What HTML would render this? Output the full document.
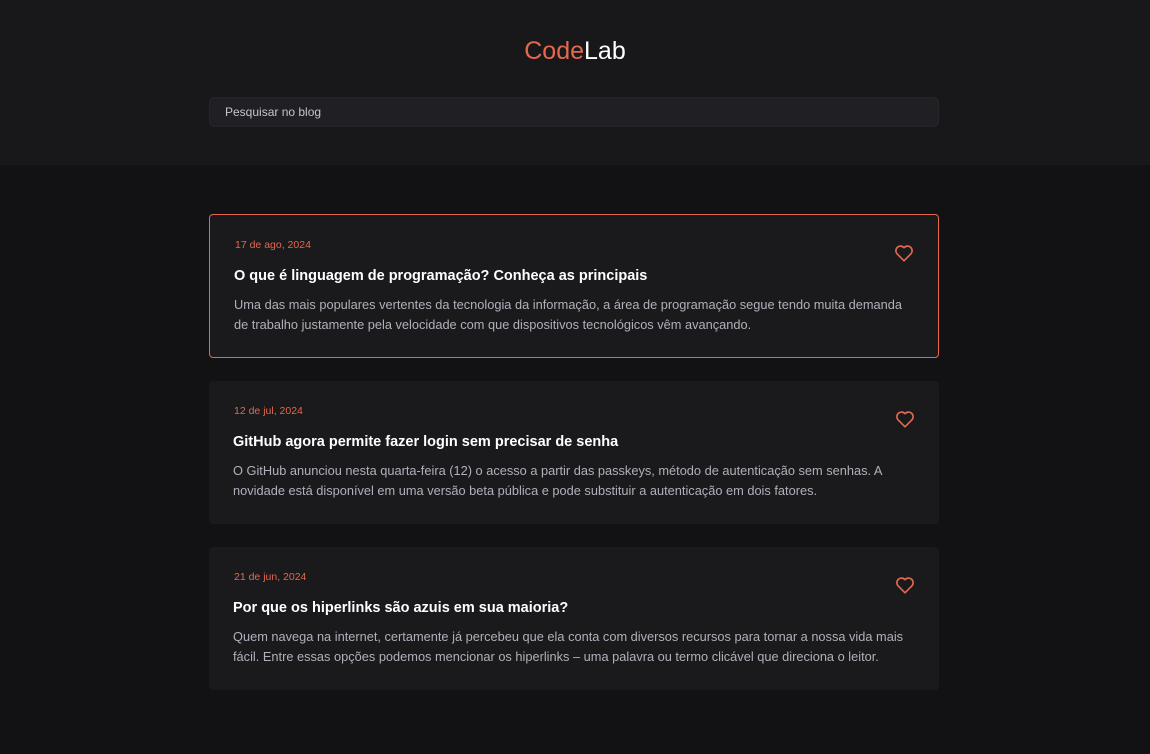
<!DOCTYPE html>
<html><head><meta charset="utf-8"><style>
*{margin:0;padding:0;box-sizing:border-box}
body{width:1150px;height:754px;background:#121214;font-family:"Liberation Sans",sans-serif;overflow:hidden}
header{height:165px;background:#18181b;position:relative}
h1{position:absolute;top:37px;width:100%;text-align:center;font-size:25px;font-weight:normal;color:#fff;letter-spacing:0}
h1 span{color:#e3684f}
.search{position:absolute;left:209px;top:97px;width:730px;height:30px;background:#202024;border:1px solid #26262a;border-radius:5px;color:#c4c4cc;font-size:12px;padding:7px 15px}
.card{position:absolute;left:209px;width:730px;background:#1a1a1d;border-radius:4px;padding:0 24px}
.card.a{border:1px solid #e3684f}
.date{position:absolute;top:24px;left:25px;color:#e3684f;font-size:10.5px}
.t{position:absolute;top:53px;left:24px;color:#fff;font-size:14.5px;font-weight:bold}
.d{position:absolute;top:80px;left:24px;right:30px;color:#b0b0ba;font-size:12.8px;line-height:20px}
svg{position:absolute;right:24px;top:29px}
</style></head><body>
<header><h1><span>Code</span>Lab</h1><div class="search">Pesquisar no blog</div></header>
<div class="card a" style="top:214px;height:144px"><div class="date">17 de ago, 2024</div><div class="t">O que é linguagem de programação? Conheça as principais</div><div class="d">Uma das mais populares vertentes da tecnologia da informação, a área de programação segue tendo muita demanda de trabalho justamente pela velocidade com que dispositivos tecnológicos vêm avançando.</div><svg width="20" height="18" viewBox="0 0 24 22"><path d="M12 20.5 3.5 12A5.2 5.2 0 0 1 12 4.5 5.2 5.2 0 0 1 20.5 12Z" fill="none" stroke="#e3684f" stroke-width="2" stroke-linejoin="round"/></svg></div>
<div class="card" style="top:381px;height:143px"><div class="date">12 de jul, 2024</div><div class="t">GitHub agora permite fazer login sem precisar de senha</div><div class="d">O GitHub anunciou nesta quarta-feira (12) o acesso a partir das passkeys, método de autenticação sem senhas. A novidade está disponível em uma versão beta pública e pode substituir a autenticação em dois fatores.</div><svg width="20" height="18" viewBox="0 0 24 22"><path d="M12 20.5 3.5 12A5.2 5.2 0 0 1 12 4.5 5.2 5.2 0 0 1 20.5 12Z" fill="none" stroke="#e3684f" stroke-width="2" stroke-linejoin="round"/></svg></div>
<div class="card" style="top:547px;height:143px"><div class="date">21 de jun, 2024</div><div class="t">Por que os hiperlinks são azuis em sua maioria?</div><div class="d">Quem navega na internet, certamente já percebeu que ela conta com diversos recursos para tornar a nossa vida mais fácil. Entre essas opções podemos mencionar os hiperlinks – uma palavra ou termo clicável que direciona o leitor.</div><svg width="20" height="18" viewBox="0 0 24 22"><path d="M12 20.5 3.5 12A5.2 5.2 0 0 1 12 4.5 5.2 5.2 0 0 1 20.5 12Z" fill="none" stroke="#e3684f" stroke-width="2" stroke-linejoin="round"/></svg></div>
</body></html>
